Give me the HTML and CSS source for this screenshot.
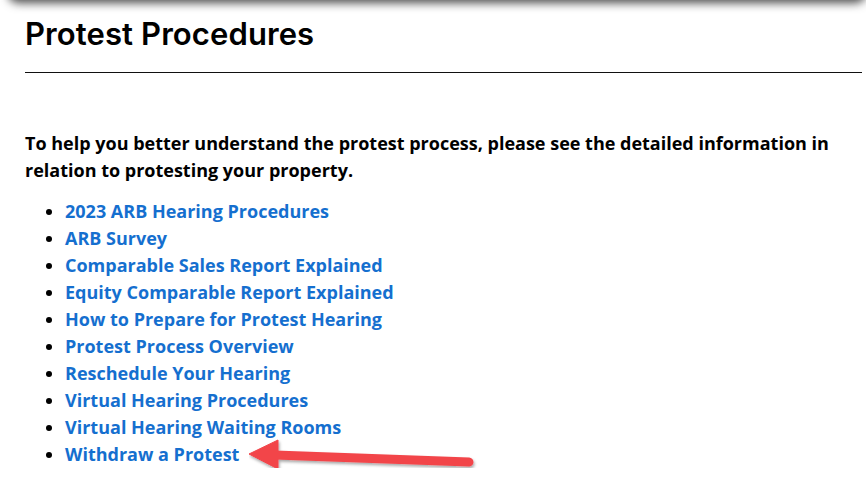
FILE: index.html
```html
<!DOCTYPE html>
<html lang="en">
<head>
<meta charset="utf-8">
<title>Protest Procedures</title>
<link rel="stylesheet" href="styles.css">
</head>
<body>
<div class="topshade"></div>
<main class="content">
  <h1 class="title">Protest Procedures</h1>
  <hr class="rule">
  <p class="intro">To help you better understand the protest process, please see the detailed information in relation to protesting your property.</p>
  <ul class="links">
    <li><a href="#">2023 ARB Hearing Procedures</a></li>
    <li><a href="#">ARB Survey</a></li>
    <li><a href="#">Comparable Sales Report Explained</a></li>
    <li><a href="#">Equity Comparable Report Explained</a></li>
    <li><a href="#">How to Prepare for Protest Hearing</a></li>
    <li><a href="#">Protest Process Overview</a></li>
    <li><a href="#">Reschedule Your Hearing</a></li>
    <li><a href="#">Virtual Hearing Procedures</a></li>
    <li><a href="#">Virtual Hearing Waiting Rooms</a></li>
    <li class="marked"><a href="#">Withdraw a Protest</a>
      <svg class="arrow" width="240" height="50" viewBox="0 0 240 50" aria-hidden="true">
        <defs>
          <filter id="sh" x="-10%" y="-40%" width="120%" height="180%">
            <feDropShadow dx="1" dy="2" stdDeviation="1.6" flood-color="#000" flood-opacity="0.35"/>
          </filter>
        </defs>
        <g filter="url(#sh)" fill="#f2454a" stroke="#f2454a">
          <line x1="26" y1="18" x2="220" y2="25" stroke-width="9" stroke-linecap="round"/>
          <polygon points="0,17 29,3 29,32" stroke-width="1" stroke-linejoin="round"/>
        </g>
      </svg>
    </li>
  </ul>
</main>
</body>
</html>
```
FILE: styles.css
```css
html, body {
  margin: 0;
  padding: 0;
  background: #fff;
}
body {
  overflow: hidden;
}
.topshade {
  height: 20px;
  margin: -20px 0 0 8px;
  border-radius: 10px;
  box-shadow: 0 3px 10px rgba(0, 0, 0, 0.7);
}
.content {
  padding: 0 4px 0 25px;
}
.title {
  margin: 0;
  padding-top: 14px;
  font-family: Inter, "Noto Sans", sans-serif;
  font-weight: 600;
  font-size: 31px;
  line-height: 40px;
  letter-spacing: 0.1px;
  color: #000;
}
.rule {
  margin: 18px 0 0 0;
  border: 0;
  border-top: 1px solid #111;
  height: 0;
}
.intro {
  margin: 57px 0 14px 0;
  font-family: "Open Sans", sans-serif;
  font-weight: 700;
  font-size: 18px;
  line-height: 27px;
  color: #000;
}
.links {
  margin: 0;
  padding-left: 40px;
  font-family: "Open Sans", sans-serif;
  font-weight: 700;
  font-size: 18px;
  line-height: 27px;
  color: #000;
}
.links a {
  color: #156fcf;
  text-decoration: none;
}
.marked {
  position: relative;
}
.arrow {
  position: absolute;
  left: 184px;
  top: -4px;
}
```
